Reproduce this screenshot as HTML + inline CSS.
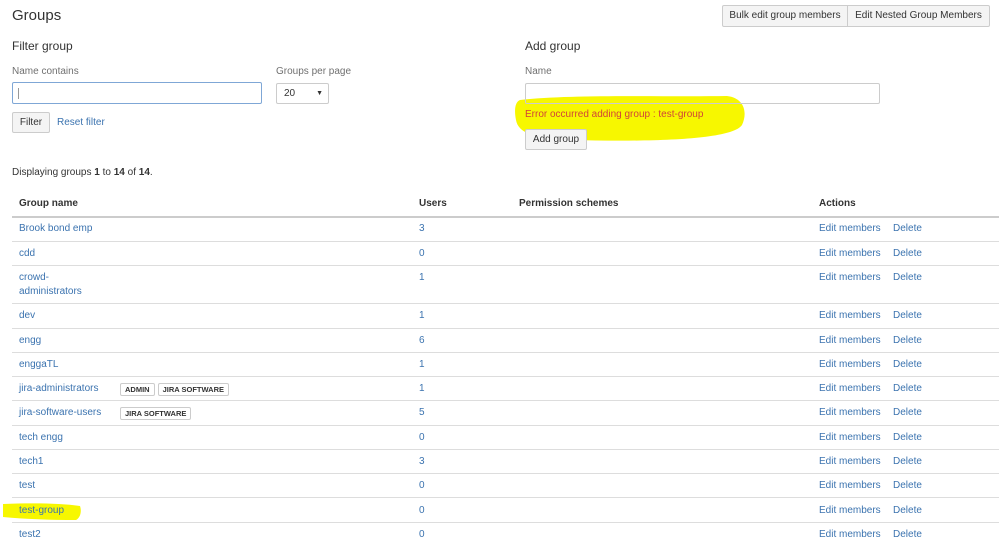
<!DOCTYPE html>
<html><head><style>
body{margin:0;width:999px;height:543px;overflow:hidden;background:#fff;font-family:"Liberation Sans",Arial,sans-serif;font-size:10px;color:#333;position:relative}
.a{position:absolute;white-space:nowrap}
a,.l{color:#3b73af;text-decoration:none}
.btn{position:absolute;border:1px solid #ccc;background:#f4f4f4;border-radius:2px;font-size:10px;color:#333;box-sizing:border-box;text-align:center}
.inp{position:absolute;border:1px solid #ccc;background:#fff;box-sizing:border-box;border-radius:2px}
.line{position:absolute;left:12px;width:987px;height:1px;background:#ddd}
.lab{position:absolute;font-size:10px;color:#707070}
.tag{display:inline-block;border:1px solid #ccc;border-radius:2px;font-size:7.5px;font-weight:bold;padding:1px 4px;margin-right:3px;color:#333;line-height:9px}
</style></head><body>
<div class="a" style="left:12px;top:7px;font-size:15px;color:#333">Groups</div>
<div class="btn" style="left:722px;top:5px;width:126px;height:22px;line-height:20px;border-radius:2px 0 0 2px">Bulk edit group members</div>
<div class="btn" style="left:847px;top:5px;width:143px;height:22px;line-height:20px;border-radius:0 2px 2px 0">Edit Nested Group Members</div>

<div class="a" style="left:12px;top:39px;font-size:12px">Filter group</div>
<div class="lab" style="left:12px;top:66px">Name contains</div>
<div class="inp" style="left:12px;top:82px;width:250px;height:22px;border-color:#7fa7d6"><div style="position:absolute;left:5px;top:5px;width:1px;height:11px;background:#999"></div></div>
<div class="lab" style="left:276px;top:66px">Groups per page</div>
<div class="inp" style="left:276px;top:83px;width:53px;height:21px;font-size:10px;line-height:19px;padding-left:7px">20<span style="position:absolute;right:5px;font-size:7px">▼</span></div>
<div class="btn" style="left:12px;top:112px;width:38px;height:21px;line-height:19px">Filter</div>
<div class="a l" style="left:57px;top:117px">Reset filter</div>

<div class="a" style="left:525px;top:39px;font-size:12px">Add group</div>
<div class="lab" style="left:525px;top:66px">Name</div>
<svg class="a" style="left:512px;top:92px" width="235" height="55"><path d="M8 8 C60 2,150 5,215 4 C232 6,236 20,230 33 C220 48,140 50,60 48 C20 47,6 40,4 28 C2 18,3 10,8 8Z" fill="#f7f700"/></svg>
<div class="inp" style="left:525px;top:83px;width:355px;height:21px;background:transparent"></div>
<div class="a" style="left:525px;top:109px;color:#d04437">Error occurred adding group : test-group</div>
<div class="btn" style="left:525px;top:129px;width:62px;height:21px;line-height:19px">Add group</div>

<div class="a" style="left:12px;top:167px">Displaying groups <b>1</b> to <b>14</b> of <b>14</b>.</div>

<div class="a" style="left:19px;top:198px;font-weight:bold">Group name</div>
<div class="a" style="left:419px;top:198px;font-weight:bold">Users</div>
<div class="a" style="left:519px;top:198px;font-weight:bold">Permission schemes</div>
<div class="a" style="left:819px;top:198px;font-weight:bold">Actions</div>
<div class="line" style="top:216px;height:2px;background:#ccc"></div>

<svg class="a" style="left:0;top:500px" width="85" height="24"><path d="M3 4 C30 3,60 3,80 6 C82 12,80 18,76 20 C50 20,25 19,3 17Z" fill="#f7f700"/></svg>

<div id="rows"></div>
<script>
var r=[["Brook bond emp",3,222],["cdd",0,247],["crowd-<br>administrators",1,271],["dev",1,309],["engg",6,334],["enggaTL",1,358],["jira-administrators",1,382,'<span class="tag">ADMIN</span><span class="tag">JIRA SOFTWARE</span>'],["jira-software-users",5,406,'<span class="tag">JIRA SOFTWARE</span>'],["tech engg",0,431],["tech1",3,455],["test",0,479],["test-group",0,504],["test2",0,528]];
var lines=[241,265,303,328,352,376,400,425,449,473,497,522];
var h="";
r.forEach(function(x){h+='<div class="a l" style="left:19px;top:'+x[2]+'px;line-height:14px">'+x[0]+'</div>';
if(x[3])h+='<div class="a" style="left:120px;top:'+(x[2]+1)+'px">'+x[3]+'</div>';
h+='<div class="a l" style="left:419px;top:'+x[2]+'px;line-height:14px">'+x[1]+'</div><div class="a l" style="left:819px;top:'+x[2]+'px;line-height:14px">Edit members</div><div class="a l" style="left:893px;top:'+x[2]+'px;line-height:14px">Delete</div>';});
lines.forEach(function(y){h+='<div class="line" style="top:'+y+'px"></div>';});
document.getElementById("rows").innerHTML=h;
</script>
</body></html>
